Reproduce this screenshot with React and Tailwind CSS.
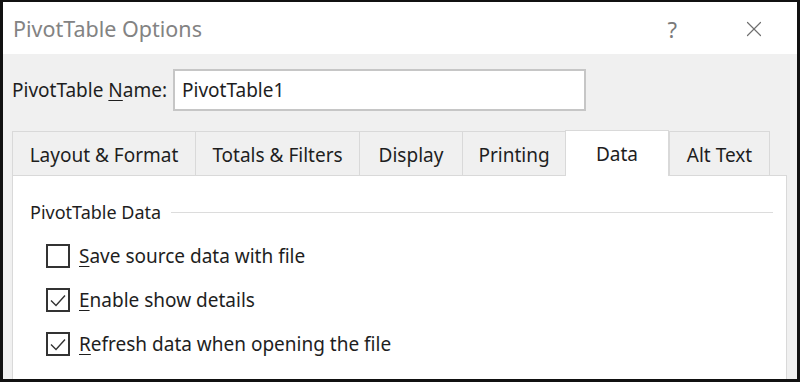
import { X } from 'lucide-react';

const tabs = [
  { label: 'Layout & Format', w: 'w-[183px]' },
  { label: 'Totals & Filters', w: 'w-[164px]' },
  { label: 'Display', w: 'w-[103px]' },
  { label: 'Printing', w: 'w-[103px]' },
  { label: 'Data', w: 'w-[104px]', active: true },
  { label: 'Alt Text', w: 'w-[101px]' },
];

const options = [
  { key: 'S', rest: 'ave source data with file', checked: false },
  { key: 'E', rest: 'nable show details', checked: true },
  { key: 'R', rest: 'efresh data when opening the file', checked: true },
];

function CheckBox({ checked }) {
  return (
    <div className="w-[24px] h-[24px] border-2 border-[#333333] bg-white flex items-center justify-center shrink-0">
      {checked && (
        <svg width="18" height="18" viewBox="0 0 18 18">
          <polyline points="2,9.5 7,14.5 16,4.5" fill="none" stroke="#333333" strokeWidth="1.4" />
        </svg>
      )}
    </div>
  );
}

export default function App() {
  return (
    <div className="w-[800px] h-[382px] bg-[#f0f0f0] border-x-[3px] border-b-[3px] border-t-2 border-[#111111] flex flex-col text-[#1e1e1e] font-['Noto_Sans',sans-serif] overflow-hidden">
      {/* title bar */}
      <div className="h-[52px] bg-white flex items-center shrink-0">
        <span className="ml-[10px] mt-[2px] text-[21.5px] text-[#838383] leading-none">PivotTable Options</span>
        <span className="ml-auto mr-[64px] mt-[2px] text-[22px] text-[#7a7a7a] leading-none">?</span>
        <X size={26} strokeWidth={1.1} className="mr-[30px] mt-[2px] text-[#6f6f6f]" />
      </div>

      {/* name row */}
      <div className="flex items-center pl-[9px] mt-[15px] h-[42px]">
        <span className="text-[19px] leading-none">PivotTable <u className="underline-offset-[3px]">N</u>ame:</span>
        <div className="ml-[6px] w-[413px] h-[42px] bg-white border-2 border-[#c6c6c6] flex items-center pl-[7px] text-[19px]">
          PivotTable1
        </div>
      </div>

      {/* tabs */}
      <div className="flex pl-[9px] mt-[19px] h-[45px] items-end relative z-10">
        {tabs.map((t) =>
          t.active ? (
            <div key={t.label} className={`${t.w} h-[46px] bg-white border-x border-t border-[#d9d9d9] -mb-px flex items-center justify-center pt-[2px] text-[19px]`}>
              {t.label}
            </div>
          ) : (
            <div key={t.label} className={`${t.w} h-[44px] bg-[#f0f0f0] border-l border-t border-[#d9d9d9] last:border-r flex items-center justify-center pt-[3px] text-[19px]`}>
              {t.label}
            </div>
          )
        )}
      </div>

      {/* panel */}
      <div className="ml-[9px] w-[775px] flex-1 bg-white border border-[#d9d9d9] border-b-0 pl-[17px] pr-[13px] pt-[27px]">
        <div className="flex items-center gap-[10px]">
          <span className="text-[18px] leading-none">PivotTable Data</span>
          <div className="flex-1 h-px bg-[#dcdcdc]"></div>
        </div>
        <div className="flex flex-col gap-[20px] mt-[23px] pl-[16px]">
          {options.map((o) => (
            <div key={o.key} className="flex items-center gap-[9px] h-[24px]">
              <CheckBox checked={o.checked} />
              <span className="text-[19px] leading-none">
                <u className="underline-offset-[3px]">{o.key}</u>{o.rest}
              </span>
            </div>
          ))}
        </div>
      </div>
    </div>
  );
}
